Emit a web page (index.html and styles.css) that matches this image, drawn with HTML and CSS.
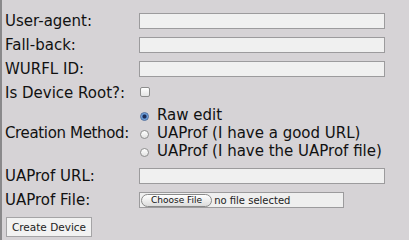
FILE: index.html
```html
<!DOCTYPE html>
<html lang="en">
<head>
  <meta charset="UTF-8">
  <title>Create Device</title>
  <link rel="stylesheet" href="styles.css">
</head>
<body>
  <form class="device-form">
    <div class="row">
      <label for="ua">User-agent:</label>
      <input type="text" id="ua" class="text">
    </div>
    <div class="row">
      <label for="fallback">Fall-back:</label>
      <input type="text" id="fallback" class="text">
    </div>
    <div class="row">
      <label for="wurfl">WURFL ID:</label>
      <input type="text" id="wurfl" class="text">
    </div>
    <div class="row">
      <label for="root">Is Device Root?:</label>
      <span><input type="checkbox" id="root" class="check"></span>
    </div>
    <div class="row row-radios">
      <label class="tight">Creation Method:</label>
      <div class="radios">
        <label class="opt"><input type="radio" name="method" class="radio" checked>Raw edit</label>
        <label class="opt"><input type="radio" name="method" class="radio">UAProf (I have a good URL)</label>
        <label class="opt"><input type="radio" name="method" class="radio">UAProf (I have the UAProf file)</label>
      </div>
    </div>
    <div class="row row-url">
      <label for="uaprof">UAProf URL:</label>
      <input type="text" id="uaprof" class="text">
    </div>
    <div class="row">
      <label>UAProf File:</label>
      <div class="file">
        <span class="file-btn">Choose File</span>
        <span class="file-name">no file selected</span>
      </div>
    </div>
    <button type="button" class="create">Create Device</button>
  </form>
</body>
</html>
```

FILE: styles.css
```css
html, body {
  height: 100%;
}
body {
  margin: 0;
  box-sizing: border-box;
  border-left: 2px solid #8a898b;
  background: #d6d3d6;
  color: #111;
  font-family: "DejaVu Sans", Verdana, sans-serif;
  font-size: 15px;
}
.device-form {
  padding: 9px 0 0 3px;
}
.row {
  display: grid;
  grid-template-columns: 134px 246px;
  align-items: center;
  height: 24px;
}
.tight {
  letter-spacing: -0.35px;
}
.text {
  box-sizing: border-box;
  height: 16px;
  width: 246px;
  margin: 0;
  padding: 0 2px;
  border: 1px solid #9c9b9d;
  background: #f0f0f0;
}
.check {
  appearance: none;
  display: block;
  box-sizing: border-box;
  width: 10px;
  height: 10px;
  margin: -2px 0 0 1px;
  border: 1px solid #8d8d8d;
  border-radius: 2px;
  background: linear-gradient(#ffffff, #e4e4e4);
}
.row-radios {
  height: 55px;
}
.radios {
  line-height: 18px;
}
.opt {
  display: block;
  white-space: nowrap;
}
.radio {
  appearance: none;
  box-sizing: border-box;
  width: 9px;
  height: 9px;
  margin: 2px 8px 0 1px;
  vertical-align: middle;
  border: 1px solid #8f8f8f;
  border-radius: 50%;
  background: linear-gradient(#ffffff, #e2e2e2);
}
.radio:checked {
  border-color: #4c6d9e;
  background: radial-gradient(circle, #1d2c55 0 1.5px, #5f94d6 2.5px, #a9c9ee 4.5px);
}
.row-url {
  margin-top: 4px;
}
.file {
  box-sizing: border-box;
  display: flex;
  align-items: center;
  width: 205px;
  height: 16px;
  border: 1px solid #9c9b9d;
  background: #efefef;
  font-size: 10px;
}
.file-btn {
  box-sizing: border-box;
  height: 13px;
  margin-left: 1px;
  padding: 0 9px;
  border: 1px solid #8a8a8a;
  border-radius: 7px;
  background: linear-gradient(#ffffff, #dcdcdc);
  font-size: 9px;
  line-height: 11px;
}
.file-name {
  margin-left: 2px;
  color: #222;
}
.create {
  display: block;
  box-sizing: border-box;
  width: 86px;
  height: 20px;
  margin: 5px 0 0 1px;
  padding: 0;
  border: 1px solid #a5a4a6;
  border-radius: 0;
  background: #f2f2f2;
  color: #222;
  font-family: "DejaVu Sans", Verdana, sans-serif;
  font-size: 10.5px;
}
```
